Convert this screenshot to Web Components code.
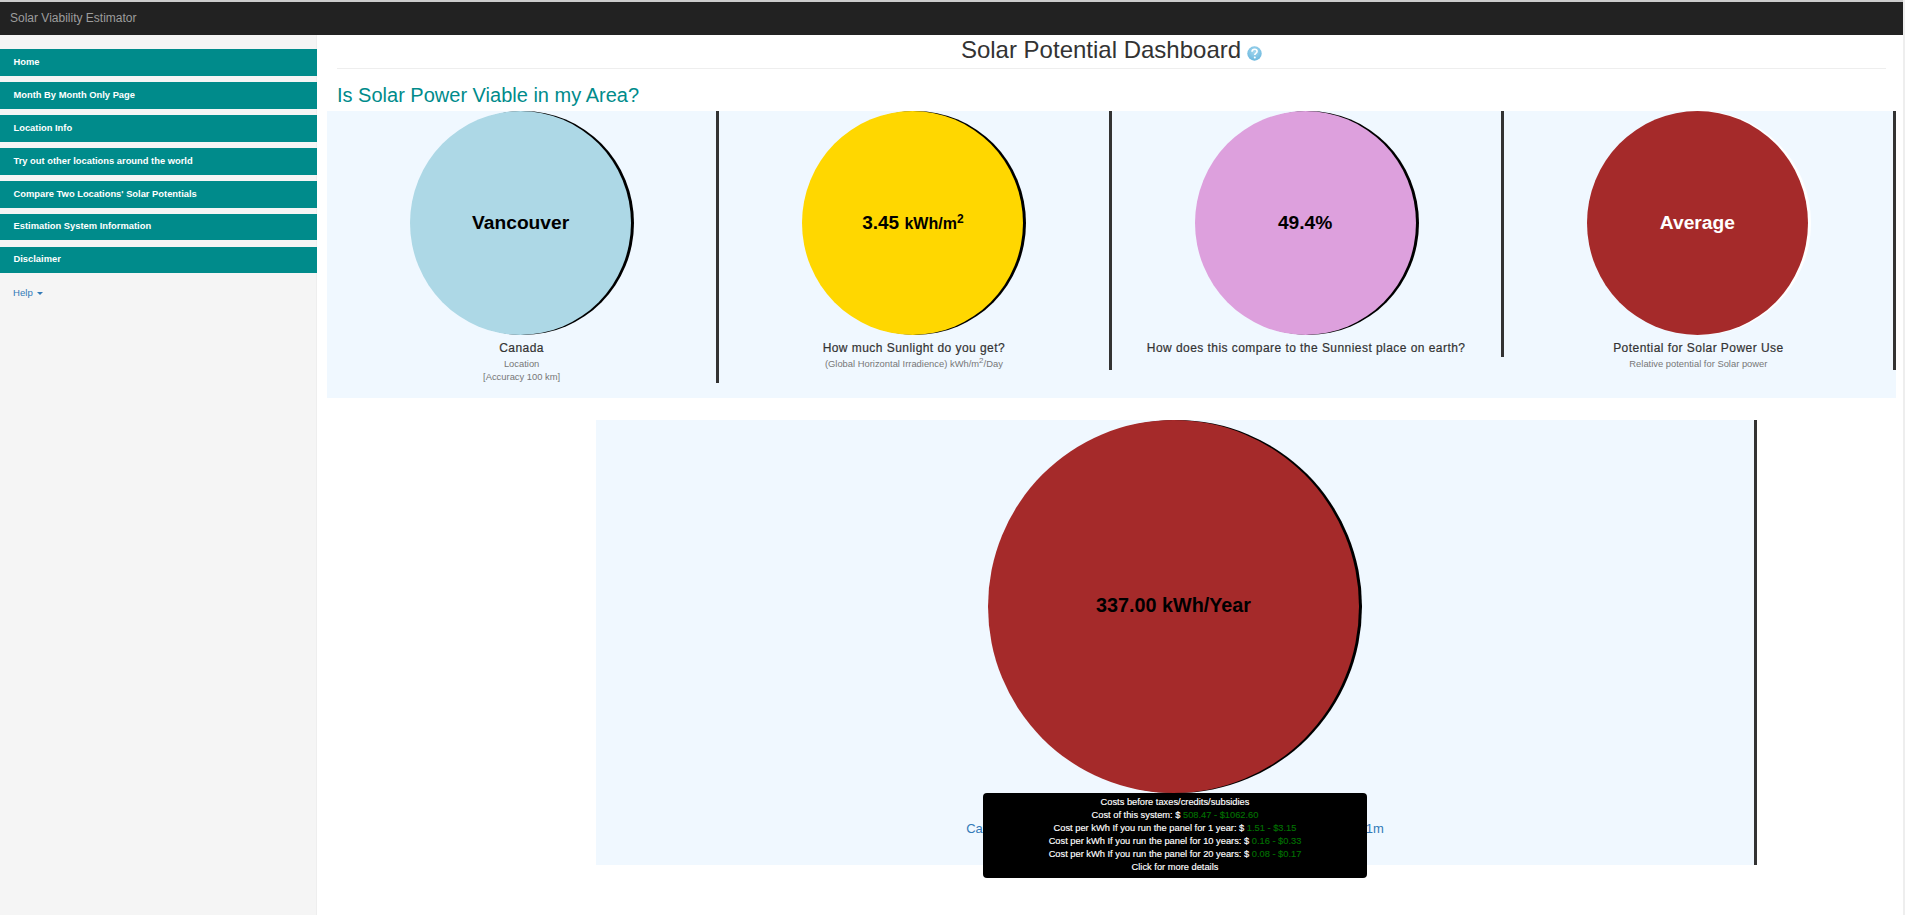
<!DOCTYPE html>
<html>
<head>
<meta charset="utf-8">
<title>Solar Viability Estimator</title>
<style>
  html, body { margin: 0; padding: 0; height: 915px; }
  html { background: #eee; }
  body { font-family: "Liberation Sans", Arial, sans-serif; overflow: hidden; }
</style>
</head>
<body>
<solar-app>
  <solar-navbar slot="top">Solar Viability Estimator</solar-navbar>
  <solar-sidebar slot="side">
    <nav-item>Home</nav-item>
    <nav-item>Month By Month Only Page</nav-item>
    <nav-item>Location Info</nav-item>
    <nav-item>Try out other locations around the world</nav-item>
    <nav-item>Compare Two Locations' Solar Potentials</nav-item>
    <nav-item style="--h:26px">Estimation System Information</nav-item>
    <nav-item style="--h:26px;margin-top:1px">Disclaimer</nav-item>
  </solar-sidebar>
  <dash-title>Solar Potential Dashboard</dash-title>
  <h3 style="margin:0;padding:13px 0 0 10px;height:29px;font-size:20px;line-height:27px;font-weight:400;color:#008b8b">Is Solar Power Viable in my Area?</h3>
  <stat-row>
    <stat-card color="#add8e6" title="Canada">
      <span slot="value">Vancouver</span>
      <div>Location</div>
      <div>[Accuracy 100 km]</div>
    </stat-card>
    <stat-card color="#ffd700" title="How much Sunlight do you get?" style="--value-size:19px">
      <span slot="value">3.45 <small style="font-size:16px">kWh/m<sup style="font-size:12px;line-height:0">2</sup></small></span>
      <div>(Global Horizontal Irradience) kWh/m<sup style="font-size:8px;line-height:0">2</sup>/Day</div>
    </stat-card>
    <stat-card color="#dda0dd" title="How does this compare to the Sunniest place on earth?">
      <span slot="value">49.4%</span>
    </stat-card>
    <stat-card color="#a52a2a" ink="#fff" rim="#fff" title="Potential for Solar Power Use">
      <span slot="value">Average</span>
      <div>Relative potential for Solar power</div>
    </stat-card>
  </stat-row>
  <energy-panel>
    <span slot="value">337.00 kWh/Year</span>
    <span slot="caption">Capacity estimate for a typical solar panel system with a size of 1m x 1m</span>
    <cost-tip slot="tip">
      <div>Costs before taxes/credits/subsidies</div>
      <div>Cost of this system: $ <b>508.47 - $1062.60</b></div>
      <div>Cost per kWh If you run the panel for 1 year: $ <b>1.51 - $3.15</b></div>
      <div>Cost per kWh If you run the panel for 10 years: $ <b>0.16 - $0.33</b></div>
      <div>Cost per kWh If you run the panel for 20 years: $ <b>0.08 - $0.17</b></div>
      <div>Click for more details</div>
    </cost-tip>
  </energy-panel>
</solar-app>

<script>
class SolarApp extends HTMLElement {
  constructor() {
    super();
    this.attachShadow({mode: "open"}).innerHTML = `
    <style>
      :host { display: block; width: 1903px; height: 915px; background: #fff; font-family: "Liberation Sans", Arial, sans-serif; }
      .body { display: grid; grid-template-columns: 317px 1fr; height: 880px; }
      main { padding: 0 7px 0 10px; min-width: 0; }
    </style>
    <slot name="top"></slot>
    <div class="body">
      <slot name="side"></slot>
      <main><slot></slot></main>
    </div>`;
  }
}

class SolarNavbar extends HTMLElement {
  constructor() {
    super();
    this.attachShadow({mode: "open"}).innerHTML = `
    <style>
      :host {
        display: flex; align-items: center; box-sizing: border-box;
        height: 35px; padding: 0 10px 2px;
        background: #222; border-top: 2px solid #ccc;
        color: #9d9d9d; font-size: 12px;
      }
    </style>
    <slot></slot>`;
  }
}

class SolarSidebar extends HTMLElement {
  constructor() {
    super();
    this.attachShadow({mode: "open"}).innerHTML = `
    <style>
      :host {
        display: flex; flex-direction: column; gap: 6px; box-sizing: border-box;
        padding-top: 14px; background: #f5f5f5; border-right: 1px solid #eee;
      }
      ::slotted(nav-item) { margin-right: -1px; }
      .help { margin-top: 1px; padding: 6px 13px; font-size: 9.6px; line-height: 14px; color: #337ab7; display: flex; align-items: center; gap: 4px; }
      .caret { width: 0; height: 0; border: 3px solid transparent; border-top-color: #337ab7; border-bottom: 0; }
    </style>
    <slot></slot>
    <div class="help">Help <span class="caret"></span></div>`;
  }
}

class NavItem extends HTMLElement {
  constructor() {
    super();
    this.attachShadow({mode: "open"}).innerHTML = `
    <style>
      :host {
        display: flex; align-items: center; box-sizing: border-box; height: var(--h, 27px);
        padding: 0 0 2px 13.5px; background: #008b8b; color: #fff;
        font-size: 9.35px; font-weight: 700;
      }
    </style>
    <slot></slot>`;
  }
}

class DashTitle extends HTMLElement {
  constructor() {
    super();
    this.attachShadow({mode: "open"}).innerHTML = `
    <style>
      :host {
        display: flex; justify-content: center; align-items: center; gap: 6px;
        box-sizing: content-box; height: 29px; padding-bottom: 4px;
        margin: 0 10px; border-bottom: 1px solid #eee;
        color: #333; font-size: 24px;
      }
      svg { width: 15px; height: 15px; margin-top: 8px; }
    </style>
    <slot></slot>
    <svg viewBox="0 0 15 15" aria-hidden="true">
      <defs>
        <radialGradient id="q" cx="50%" cy="35%" r="65%">
          <stop offset="0" stop-color="#a5d8ef"/>
          <stop offset="1" stop-color="#6cb8de"/>
        </radialGradient>
      </defs>
      <circle cx="7.5" cy="7.5" r="7.2" fill="url(#q)"/>
      <path d="M5 5.7c.1-1.6 1.2-2.5 2.6-2.5 1.5 0 2.5.9 2.5 2.1 0 1.1-.7 1.6-1.3 2-.7.5-1 .8-1 1.7" fill="none" stroke="#fff" stroke-width="1.6"/>
      <circle cx="7.8" cy="11.6" r="1" fill="#fff"/>
    </svg>`;
  }
}

class StatRow extends HTMLElement {
  constructor() {
    super();
    this.attachShadow({mode: "open"}).innerHTML = `
    <style>
      :host {
        display: grid; grid-template-columns: repeat(4, 1fr); align-items: start;
        height: 287px; background: #f0f8ff;
      }
    </style>
    <slot></slot>`;
  }
}

class StatCard extends HTMLElement {
  constructor() {
    super();
    const ink = this.getAttribute("ink") || "#000";
    const rim = this.getAttribute("rim") || "#000";
    this.attachShadow({mode: "open"}).innerHTML = `
    <style>
      :host {
        display: block; box-sizing: border-box; border-right: 3px solid #333;
        text-align: center;
      }
      .disc {
        width: 221px; height: 224px; margin-left: calc(50% - 111.5px); border-radius: 50%;
        display: flex; align-items: center; justify-content: center;
        background: ${this.getAttribute("color")}; color: ${ink};
        box-shadow: 3px 0 0 ${rim};
        font-size: var(--value-size, 19.2px); font-weight: 700;
      }
      h4 { margin: 6px 0 0; padding-bottom: 2px; font-size: 12px; line-height: 14px; font-weight: 400; color: #333; letter-spacing: .45px; -webkit-text-stroke: .2px #333; }
      .sub { font-size: 9.4px; line-height: 13px; color: #777; }
    </style>
    <div class="disc"><slot name="value"></slot></div>
    <h4>${this.getAttribute("title")}</h4>
    <div class="sub"><slot></slot></div>`;
  }
}

class EnergyPanel extends HTMLElement {
  constructor() {
    super();
    this.attachShadow({mode: "open"}).innerHTML = `
    <style>
      :host {
        display: block; position: relative; box-sizing: border-box;
        width: 1161px; height: 445px; margin: 22px 0 0 269px;
        background: #f0f8ff; border-right: 3px solid #333; text-align: center;
      }
      .disc {
        box-sizing: border-box; width: 371px; height: 373px; margin-left: 392px; padding-bottom: 2px; border-radius: 50%;
        display: flex; align-items: center; justify-content: center;
        background: #a52a2a; color: #000; box-shadow: 3px 0 0 #000;
        font-size: 19.8px; font-weight: 700;
      }
      .caption { margin-top: 28px; font-size: 13px; line-height: 16px; color: #337ab7; }
    </style>
    <div class="disc"><slot name="value"></slot></div>
    <div class="caption"><slot name="caption"></slot></div>
    <slot name="tip"></slot>`;
  }
}

class CostTip extends HTMLElement {
  constructor() {
    super();
    this.attachShadow({mode: "open"}).innerHTML = `
    <style>
      :host {
        position: absolute; left: 387px; top: 373px; box-sizing: border-box;
        width: 384px; height: 85px; padding: 3px 0; border-radius: 4px;
        background: #000; color: #fff; text-align: center;
        font-size: 9.3px; line-height: 13px; font-weight: 400;
        -webkit-text-stroke: .15px currentColor;
      }
    </style>
    <slot></slot>`;
  }
}

customElements.define("solar-app", SolarApp);
customElements.define("solar-navbar", SolarNavbar);
customElements.define("solar-sidebar", SolarSidebar);
customElements.define("nav-item", NavItem);
customElements.define("dash-title", DashTitle);
customElements.define("stat-row", StatRow);
customElements.define("stat-card", StatCard);
customElements.define("energy-panel", EnergyPanel);
customElements.define("cost-tip", CostTip);
</script>
<style>
  cost-tip b { font-weight: 400; color: #007000; }
</style>
</body>
</html>
